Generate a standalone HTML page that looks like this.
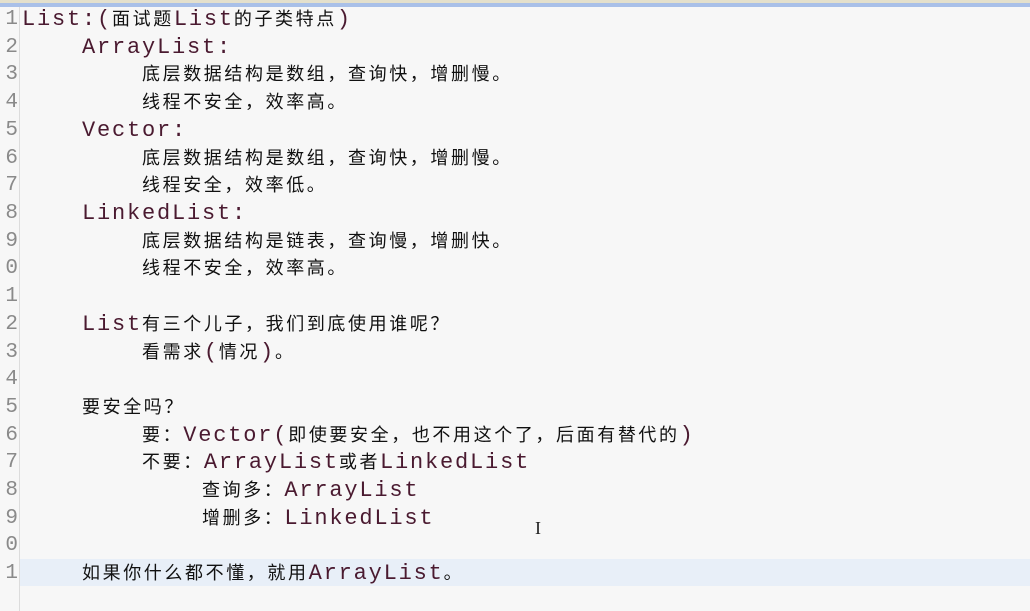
<!DOCTYPE html>
<html><head><meta charset="utf-8"><style>
body{margin:0;width:1030px;height:611px;background:#f7f7f7;overflow:hidden;position:relative;font-family:"Liberation Sans","Noto Sans CJK SC",sans-serif}
.top1{position:absolute;left:0;top:0;width:1030px;height:3px;background:#e4e0cc}
.top2{position:absolute;left:0;top:3px;width:1030px;height:4px;background:#a9c0e8}
.gut{position:absolute;left:19px;top:7px;width:1px;height:604px;background:#dcdcdc}
.hl{position:absolute;left:20px;top:559px;width:1010px;height:27px;background:#e8eff8}
.ln{position:absolute;left:0;width:18px;text-align:right;color:#8a8a8a;font-family:"Liberation Mono",monospace;font-size:21px;line-height:27.7px}
.t{position:absolute;white-space:pre;font-size:18px;line-height:27.7px;color:#111;letter-spacing:2.6px}
.m{font-family:"Liberation Mono",monospace;font-size:22px;color:#4a1a30;letter-spacing:1.8px}
</style></head><body>
<div class="top1"></div><div class="top2"></div><div class="gut"></div><div class="hl"></div>
<div class="ln" style="top:6px">1</div><div class="ln" style="top:34px">2</div><div class="ln" style="top:61px">3</div><div class="ln" style="top:89px">4</div><div class="ln" style="top:117px">5</div><div class="ln" style="top:145px">6</div><div class="ln" style="top:172px">7</div><div class="ln" style="top:200px">8</div><div class="ln" style="top:228px">9</div><div class="ln" style="top:255px">0</div><div class="ln" style="top:283px">1</div><div class="ln" style="top:311px">2</div><div class="ln" style="top:339px">3</div><div class="ln" style="top:366px">4</div><div class="ln" style="top:394px">5</div><div class="ln" style="top:422px">6</div><div class="ln" style="top:449px">7</div><div class="ln" style="top:477px">8</div><div class="ln" style="top:505px">9</div><div class="ln" style="top:532px">0</div><div class="ln" style="top:560px">1</div>
<div class="t" style="left:22px;top:6px"><span class="m">List:(</span>面试题<span class="m">List</span>的子类特点<span class="m">)</span></div>
<div class="t" style="left:82px;top:34px"><span class="m">ArrayList:</span></div>
<div class="t" style="left:142px;top:61px">底层数据结构是数组，查询快，增删慢。</div>
<div class="t" style="left:142px;top:89px">线程不安全，效率高。</div>
<div class="t" style="left:82px;top:117px"><span class="m">Vector:</span></div>
<div class="t" style="left:142px;top:145px">底层数据结构是数组，查询快，增删慢。</div>
<div class="t" style="left:142px;top:172px">线程安全，效率低。</div>
<div class="t" style="left:82px;top:200px"><span class="m">LinkedList:</span></div>
<div class="t" style="left:142px;top:228px">底层数据结构是链表，查询慢，增删快。</div>
<div class="t" style="left:142px;top:255px">线程不安全，效率高。</div>
<div class="t" style="left:82px;top:311px"><span class="m">List</span>有三个儿子，我们到底使用谁呢？</div>
<div class="t" style="left:142px;top:339px">看需求<span class="m">(</span>情况<span class="m">)</span>。</div>
<div class="t" style="left:82px;top:394px">要安全吗？</div>
<div class="t" style="left:142px;top:422px">要：<span class="m">Vector(</span>即使要安全，也不用这个了，后面有替代的<span class="m">)</span></div>
<div class="t" style="left:142px;top:449px">不要：<span class="m">ArrayList</span>或者<span class="m">LinkedList</span></div>
<div class="t" style="left:202px;top:477px">查询多：<span class="m">ArrayList</span></div>
<div class="t" style="left:202px;top:505px">增删多：<span class="m">LinkedList</span></div>
<div class="t" style="left:82px;top:560px">如果你什么都不懂，就用<span class="m">ArrayList</span>。</div>
<div style="position:absolute;left:535px;top:518px;font-family:'Liberation Serif',serif;font-size:18px;color:#222">I</div>
</body></html>
